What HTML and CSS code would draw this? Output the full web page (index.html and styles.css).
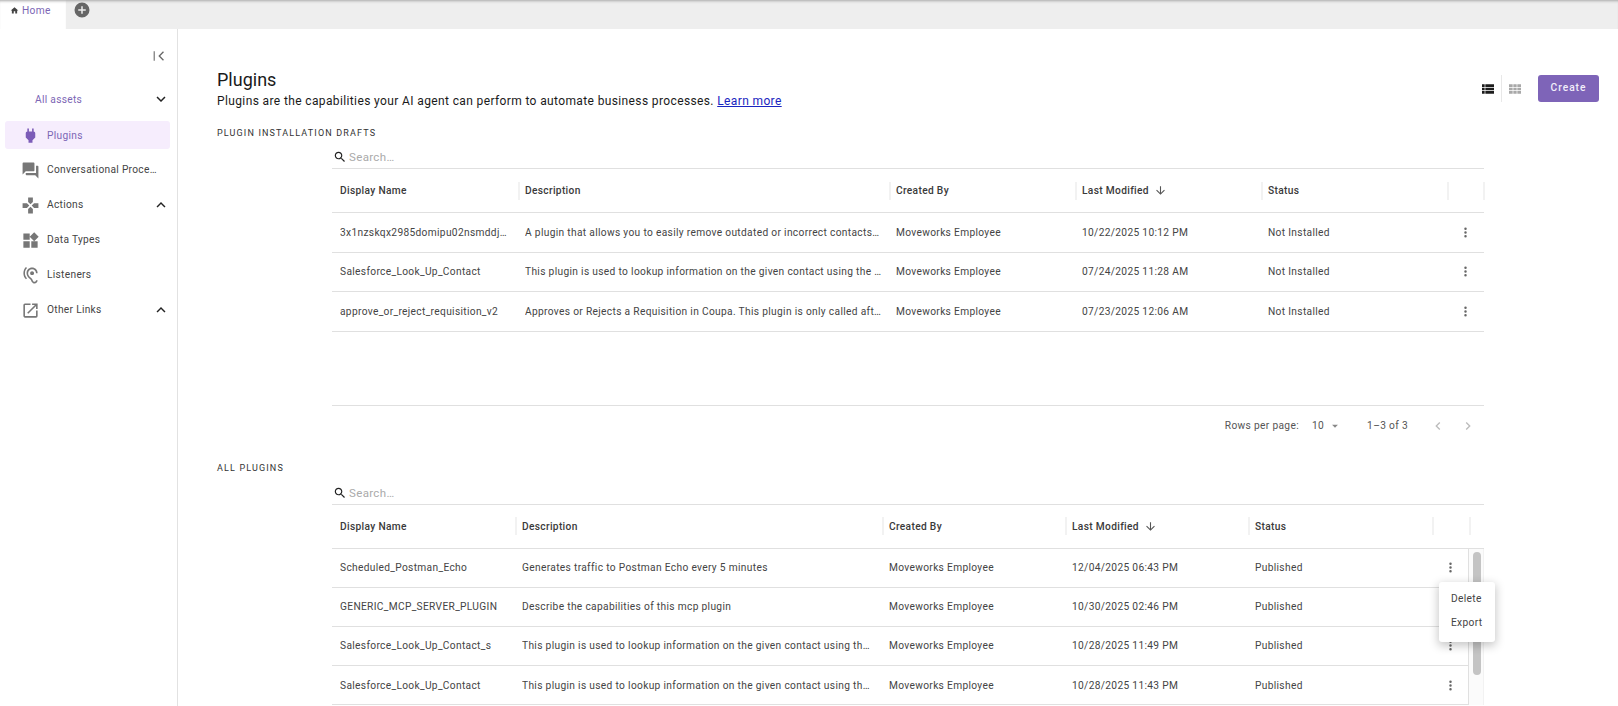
FILE: index.html
```html
<!DOCTYPE html>
<html lang="en">
<head>
<meta charset="utf-8">
<title>Plugins</title>
<link rel="stylesheet" href="styles.css">
</head>
<body>
<div class="app">
  <header class="tabbar">
    <div class="tab">
      <svg class="tab-icon" viewBox="0 0 24 24"><path d="M10 20v-6h4v6h5v-8h3L12 3 2 12h3v8z"/></svg>
      <span>Home</span>
    </div>
    <span class="add-tab">
      <svg viewBox="0 0 24 24"><path d="M12 2a10 10 0 1 0 0 20 10 10 0 0 0 0-20zm5 11h-4v4h-2v-4H7v-2h4V7h2v4h4z"/></svg>
    </span>
  </header>
  <div class="body">
    <aside class="sidebar">
      <div class="collapse">
        <svg viewBox="0 0 24 24"><path d="M4 5h1.600v14H4zM19.400 6.400 18 5l-7 7 7 7 1.400-1.400L13.800 12z"/></svg>
      </div>
      <div class="assets">
        <span>All assets</span>
        <svg class="chev" viewBox="0 0 24 24"><path d="M7.400 8.600 12 13.200l4.600-4.600L18 10l-6 6-6-6z"/></svg>
      </div>
      <nav class="nav">
        <a class="nav-item active">
          <svg viewBox="0 0 24 24"><path d="M16 7V3h-2v4h-4V3H8v4c-1 0-2 1-2 2v5.500L9.500 18v3h5v-3l3.500-3.500V9c0-1-1-2-2-2z"/></svg>
          <span>Plugins</span>
        </a>
        <a class="nav-item">
          <svg viewBox="0 0 24 24"><path d="M21 6h-2v9H6v2c0 .55.45 1 1 1h11l4 4V7c0-.55-.45-1-1-1zm-4 6V3c0-.55-.45-1-1-1H3c-.55 0-1 .45-1 1v14l4-4h10c.55 0 1-.45 1-1z"/></svg>
          <span>Conversational Proce…</span>
        </a>
        <a class="nav-item">
          <svg viewBox="0 0 24 24"><path d="M15 7.500V2H9v5.500l3 3 3-3zM7.500 9H2v6h5.500l3-3-3-3zM9 16.500V22h6v-5.500l-3-3-3 3zM16.500 9l-3 3 3 3H22V9h-5.500z"/></svg>
          <span>Actions</span>
          <svg class="chev" viewBox="0 0 24 24"><path d="M7.400 15.400 12 10.800l4.600 4.600L18 14l-6-6-6 6z"/></svg>
        </a>
        <a class="nav-item">
          <svg viewBox="0 0 24 24"><path d="M13 13v8h8v-8h-8zM3 21h8v-8H3v8zM3 3v8h8V3H3zm13.660-1.310L11 7.340 16.660 13l5.660-5.660-5.660-5.650z"/></svg>
          <span>Data Types</span>
        </a>
        <a class="nav-item">
          <svg viewBox="0 0 24 24"><path d="M17 20c-.29 0-.56-.06-.76-.15-.71-.37-1.210-.88-1.710-2.380-.51-1.560-1.470-2.290-2.390-3-.79-.61-1.610-1.240-2.320-2.530C9.290 10.980 9 9.930 9 9c0-2.800 2.200-5 5-5s5 2.200 5 5h2c0-3.930-3.070-7-7-7S7 5.070 7 9c0 1.260.38 2.650 1.070 3.900.91 1.650 1.980 2.480 2.850 3.150.81.62 1.390 1.070 1.710 2.050.6 1.820 1.370 2.840 2.730 3.550.51.23 1.070.35 1.640.35 2.210 0 4-1.790 4-4h-2c0 1.100-.9 2-2 2zM7.640 2.640 6.220 1.220C4.230 3.210 3 5.960 3 9s1.230 5.790 3.220 7.780l1.410-1.410C6.010 13.740 5 11.490 5 9s1.010-4.740 2.640-6.360zM11.500 9c0 1.380 1.120 2.500 2.500 2.500s2.500-1.120 2.500-2.500-1.120-2.500-2.500-2.500-2.500 1.120-2.500 2.500z"/></svg>
          <span>Listeners</span>
        </a>
        <a class="nav-item">
          <svg viewBox="0 0 24 24"><path d="M19 19H5V5h7V3H5a2 2 0 0 0-2 2v14c0 1.100.9 2 2 2h14a2 2 0 0 0 2-2v-7h-2zM14 3v2h3.600l-9.800 9.800 1.400 1.400L19 6.400V10h2V3z"/></svg>
          <span>Other Links</span>
          <svg class="chev" viewBox="0 0 24 24"><path d="M7.400 15.400 12 10.800l4.600 4.600L18 14l-6-6-6 6z"/></svg>
        </a>
      </nav>
    </aside>
    <main class="content">
      <div class="page-head">
        <div class="titles">
          <h1>Plugins</h1>
          <p>Plugins are the capabilities your AI agent can perform to automate business processes. <a href="#">Learn more</a></p>
        </div>
        <div class="actions">
          <span class="view-btn on"><svg viewBox="0 0 24 24"><path d="M3 5h4v4H3zM3 10h4v4H3zM3 15h4v4H3zM8 5h13v4H8zM8 10h13v4H8zM8 15h13v4H8z"/></svg></span>
          <span class="view-sep"></span>
          <span class="view-btn"><svg viewBox="0 0 24 24"><path d="M3 5h5.500v4H3zM9.500 5h5v4h-5zM15.500 5H21v4h-5.500zM3 10h5.500v4H3zM9.500 10h5v4h-5zM15.500 10H21v4h-5.500zM3 15h5.500v4H3zM9.500 15h5v4h-5zM15.500 15H21v4h-5.500z"/></svg></span>
          <button class="create">Create</button>
        </div>
      </div>

      <h2 class="section">PLUGIN INSTALLATION DRAFTS</h2>
      <section class="panel">
        <div class="search">
          <svg viewBox="0 0 24 24"><path d="M15.500 14h-.79l-.28-.27C15.410 12.590 16 11.110 16 9.500 16 5.910 13.090 3 9.500 3S3 5.910 3 9.500 5.910 16 9.500 16c1.610 0 3.090-.59 4.230-1.570l.27.28v.79l5 4.990L20.490 19l-4.990-5zm-6 0C7.010 14 5 11.990 5 9.500S7.010 5 9.500 5 14 7.010 14 9.500 11.990 14 9.500 14z"/></svg>
          <span>Search…</span>
        </div>
        <div class="grid drafts">
          <div class="row head">
            <div class="cell">Display Name</div>
            <div class="cell">Description</div>
            <div class="cell">Created By</div>
            <div class="cell">Last Modified <svg class="sort" viewBox="0 0 24 24"><path d="m20 12-1.400-1.400-5.600 5.600V4h-2v12.200l-5.600-5.600L4 12l8 8z"/></svg></div>
            <div class="cell">Status</div>
            <div class="cell"></div>
            <div class="cell end"></div>
          </div>
          <div class="row">
            <div class="cell"><span class="clip">3x1nzskqx2985domipu02nsmddj…</span></div>
            <div class="cell"><span class="clip">A plugin that allows you to easily remove outdated or incorrect contacts…</span></div>
            <div class="cell">Moveworks Employee</div>
            <div class="cell">10/22/2025 10:12 PM</div>
            <div class="cell">Not Installed</div>
            <div class="cell more"><svg viewBox="0 0 24 24"><path d="M12 8a2 2 0 1 0 0-4 2 2 0 0 0 0 4zm0 2a2 2 0 1 0 0 4 2 2 0 0 0 0-4zm0 6a2 2 0 1 0 0 4 2 2 0 0 0 0-4z"/></svg></div>
            <div class="cell end"></div>
          </div>
          <div class="row">
            <div class="cell"><span class="clip">Salesforce_Look_Up_Contact</span></div>
            <div class="cell"><span class="clip">This plugin is used to lookup information on the given contact using the …</span></div>
            <div class="cell">Moveworks Employee</div>
            <div class="cell">07/24/2025 11:28 AM</div>
            <div class="cell">Not Installed</div>
            <div class="cell more"><svg viewBox="0 0 24 24"><path d="M12 8a2 2 0 1 0 0-4 2 2 0 0 0 0 4zm0 2a2 2 0 1 0 0 4 2 2 0 0 0 0-4zm0 6a2 2 0 1 0 0 4 2 2 0 0 0 0-4z"/></svg></div>
            <div class="cell end"></div>
          </div>
          <div class="row">
            <div class="cell"><span class="clip">approve_or_reject_requisition_v2</span></div>
            <div class="cell"><span class="clip">Approves or Rejects a Requisition in Coupa. This plugin is only called aft…</span></div>
            <div class="cell">Moveworks Employee</div>
            <div class="cell">07/23/2025 12:06 AM</div>
            <div class="cell">Not Installed</div>
            <div class="cell more"><svg viewBox="0 0 24 24"><path d="M12 8a2 2 0 1 0 0-4 2 2 0 0 0 0 4zm0 2a2 2 0 1 0 0 4 2 2 0 0 0 0-4zm0 6a2 2 0 1 0 0 4 2 2 0 0 0 0-4z"/></svg></div>
            <div class="cell end"></div>
          </div>
        </div>
        <div class="filler"></div>
        <div class="pager">
          <span class="rpp">Rows per page:</span>
          <span class="rpp-val">10</span>
          <svg class="caret" viewBox="0 0 24 24"><path d="m7 10 5 5 5-5z"/></svg>
          <span class="count">1–3 of 3</span>
          <svg class="pg" viewBox="0 0 24 24"><path d="M15.400 7.400 14 6l-6 6 6 6 1.400-1.400-4.600-4.600z"/></svg>
          <svg class="pg" viewBox="0 0 24 24"><path d="M10 6 8.600 7.400l4.600 4.600-4.600 4.600L10 18l6-6z"/></svg>
        </div>
      </section>

      <h2 class="section second">ALL PLUGINS</h2>
      <section class="panel">
        <div class="search search-second">
          <svg viewBox="0 0 24 24"><path d="M15.500 14h-.79l-.28-.27C15.410 12.590 16 11.110 16 9.500 16 5.910 13.090 3 9.500 3S3 5.910 3 9.500 5.910 16 9.500 16c1.610 0 3.090-.59 4.230-1.570l.27.28v.79l5 4.990L20.490 19l-4.990-5zm-6 0C7.010 14 5 11.990 5 9.500S7.010 5 9.500 5 14 7.010 14 9.500 11.990 14 9.500 14z"/></svg>
          <span>Search…</span>
        </div>
        <div class="grid all">
          <div class="row head">
            <div class="cell">Display Name</div>
            <div class="cell">Description</div>
            <div class="cell">Created By</div>
            <div class="cell">Last Modified <svg class="sort" viewBox="0 0 24 24"><path d="m20 12-1.400-1.400-5.600 5.600V4h-2v12.200l-5.600-5.600L4 12l8 8z"/></svg></div>
            <div class="cell">Status</div>
            <div class="cell"></div>
            <div class="cell end"></div>
          </div>
          <div class="all-body">
            <div class="rows">
              <div class="row">
                <div class="cell"><span class="clip">Scheduled_Postman_Echo</span></div>
                <div class="cell"><span class="clip">Generates traffic to Postman Echo every 5 minutes</span></div>
                <div class="cell">Moveworks Employee</div>
                <div class="cell">12/04/2025 06:43 PM</div>
                <div class="cell">Published</div>
                <div class="cell more"><svg viewBox="0 0 24 24"><path d="M12 8a2 2 0 1 0 0-4 2 2 0 0 0 0 4zm0 2a2 2 0 1 0 0 4 2 2 0 0 0 0-4zm0 6a2 2 0 1 0 0 4 2 2 0 0 0 0-4z"/></svg></div>
              </div>
              <div class="row">
                <div class="cell"><span class="clip">GENERIC_MCP_SERVER_PLUGIN</span></div>
                <div class="cell"><span class="clip">Describe the capabilities of this mcp plugin</span></div>
                <div class="cell">Moveworks Employee</div>
                <div class="cell">10/30/2025 02:46 PM</div>
                <div class="cell">Published</div>
                <div class="cell more"><svg viewBox="0 0 24 24"><path d="M12 8a2 2 0 1 0 0-4 2 2 0 0 0 0 4zm0 2a2 2 0 1 0 0 4 2 2 0 0 0 0-4zm0 6a2 2 0 1 0 0 4 2 2 0 0 0 0-4z"/></svg></div>
              </div>
              <div class="row">
                <div class="cell"><span class="clip">Salesforce_Look_Up_Contact_s</span></div>
                <div class="cell"><span class="clip">This plugin is used to lookup information on the given contact using th…</span></div>
                <div class="cell">Moveworks Employee</div>
                <div class="cell">10/28/2025 11:49 PM</div>
                <div class="cell">Published</div>
                <div class="cell more"><svg viewBox="0 0 24 24"><path d="M12 8a2 2 0 1 0 0-4 2 2 0 0 0 0 4zm0 2a2 2 0 1 0 0 4 2 2 0 0 0 0-4zm0 6a2 2 0 1 0 0 4 2 2 0 0 0 0-4z"/></svg></div>
              </div>
              <div class="row">
                <div class="cell"><span class="clip">Salesforce_Look_Up_Contact</span></div>
                <div class="cell"><span class="clip">This plugin is used to lookup information on the given contact using th…</span></div>
                <div class="cell">Moveworks Employee</div>
                <div class="cell">10/28/2025 11:43 PM</div>
                <div class="cell">Published</div>
                <div class="cell more"><svg viewBox="0 0 24 24"><path d="M12 8a2 2 0 1 0 0-4 2 2 0 0 0 0 4zm0 2a2 2 0 1 0 0 4 2 2 0 0 0 0-4zm0 6a2 2 0 1 0 0 4 2 2 0 0 0 0-4z"/></svg></div>
              </div>
            </div>
            <div class="scrolltrack"><div class="scrollthumb"></div></div>
            <div class="menu">
              <div class="menu-item">Delete</div>
              <div class="menu-item">Export</div>
            </div>
          </div>
        </div>
      </section>
    </main>
  </div>
</div>
</body>
</html>
```

FILE: styles.css
```css
* { box-sizing: border-box; }
html, body { margin: 0; height: 100%; overflow: hidden; }
body { font-family: Roboto, "Liberation Sans", sans-serif; color: #333; background: #fff; }
svg { display: block; fill: currentColor; }

.app { height: 706px; display: flex; flex-direction: column; overflow: hidden; }

.tabbar { flex: none; height: 29px; background: #eeeeee; display: flex; align-items: flex-start; box-shadow: inset 0 3px 3px -2px #a8a8a8; }
.tab { width: 66px; height: 29px; background: #fff; display: flex; align-items: center; gap: 3px; padding: 0 0 9px 10px; font-size: 10.200px; letter-spacing: .3px; color: #7c66b5; box-shadow: inset 0 3px 3px -2px #a8a8a8; }
.tab-icon { width: 9px; height: 9px; color: #444; }
.add-tab { margin: 1px 0 0 7px; color: #666; }
.add-tab svg { width: 18px; height: 18px; }

.body { flex: 1; display: flex; min-height: 0; }

.sidebar { flex: none; width: 178px; border-right: 1px solid #e2e2e2; padding: 0 7px 0 5px; }
.collapse { display: flex; justify-content: flex-end; padding: 19px 3px 0 0; color: #666; height: 56px; }
.collapse svg { width: 16px; height: 16px; }
.assets { display: flex; align-items: center; justify-content: space-between; height: 30px; padding: 0 0 0 30px; margin-top: -1px; font-size: 10.200px; letter-spacing: .3px; color: #7c66b5; }
.chev { width: 18px; height: 18px; color: #222; flex: none; }
.nav { margin-top: 7px; display: flex; flex-direction: column; }
.nav-item { height: 35px; display: flex; align-items: center; padding: 0 0 0 16px; gap: 7px; font-size: 10.200px; letter-spacing: .3px; color: #444; border-radius: 3px; }
.nav-item > svg:first-child { width: 19px; height: 19px; color: #777; flex: none; margin-top: 1px; }
.nav-item > span { flex: 1; white-space: nowrap; }
.nav-item.active { height: 28px; background: #f6edfd; color: #7c66b5; margin-bottom: 3px; }
.nav-item.active > svg:first-child { color: #7c5cb8; }

.content { flex: 1; min-width: 0; padding: 40px 0 0 39px; }
.page-head { display: flex; justify-content: space-between; height: 58px; padding-right: 19px; }
h1 { margin: 0; font-size: 18px; font-weight: 400; line-height: 22px; color: #1a1a1a; }
.titles p { margin: 2px 0 0; font-size: 12px; line-height: 16px; letter-spacing: .375px; color: #1a1a1a; }
.titles a { color: #1a25c0; }
.actions { display: flex; align-items: center; height: 27px; margin-top: 6px; }
.view-btn { width: 16px; height: 16px; color: #a8a8a8; }
.view-btn.on { color: #1c1c1c; }
.view-btn svg { width: 16px; height: 16px; }
.view-sep { width: 1px; height: 27px; background: #e8e8e8; margin: 0 5px; }
.create { margin-left: 15px; width: 61px; height: 27px; border: 0; border-radius: 3px; background: #7e64b8; color: #f2eefa; font: 500 10.200px Roboto, sans-serif; letter-spacing: 1px; padding: 0 0 2px; }

.section { margin: 0; font-size: 9px; font-weight: 400; letter-spacing: 1.150px; line-height: 12px; color: #333; }
.section.second { margin-top: 16px; }

.panel { margin-left: 115px; width: 1152px; }
.search { height: 30px; display: flex; align-items: center; gap: 2px; border-bottom: 1px solid #e0e0e0; font-size: 11.500px; letter-spacing: .35px; color: #aaa; padding: 6px 0 0 1px; }
.search-second { height: 31px; padding-top: 8px; }
.search svg { width: 14px; height: 14px; color: #222; }

.row { display: grid; height: 39.500px; border-bottom: 1px solid #e0e0e0; align-items: center; font-size: 10.200px; letter-spacing: .33px; color: #444; }
.drafts .row { grid-template-columns: 186px 371px 186px 186px 186px 36px 1px; }
.drafts .row.head { height: 44px; }
.all .row.head { grid-template-columns: 183px 367px 183px 183px 184px 37px 15px; height: 44px; }
.all .rows .row { grid-template-columns: 183px 367px 183px 183px 184px 37px; height: 39.200px; }
.cell { padding: 0 7px; min-width: 0; white-space: nowrap; }
.cell:first-child { padding-left: 8px; }
.clip { display: block; overflow: hidden; text-overflow: ellipsis; }
.head .cell { height: 18px; display: flex; align-items: center; font-weight: 500; color: #3a3a3a; border-left: 2px solid #f2f2f2; padding-left: 5px; }
.head .cell:first-child { border-left: 0; padding-left: 8px; }
.sort { width: 13px; height: 13px; margin-left: 5px; color: #555; }
.more { display: flex; justify-content: center; padding: 0; color: #666; }
.more svg { width: 15px; height: 15px; }

.filler { height: 74px; border-bottom: 1px solid #e0e0e0; }
.pager { height: 40px; display: flex; align-items: center; justify-content: flex-end; font-size: 10.200px; letter-spacing: .33px; color: #555; padding-right: 8px; }
.rpp-val { margin-left: 13px; }
.caret { width: 14px; height: 14px; color: #888; margin-left: 4px; }
.count { margin: 0 8px 0 25px; }
.pg { width: 16px; height: 16px; color: #bbb; margin-left: 14px; }

.all-body { position: relative; display: flex; }
.rows { width: 1137px; border-right: 1px solid #e0e0e0; }
.scrolltrack { width: 15px; padding: 3px 3px 3px 4px; border-right: 1px solid #f2f2f2; background: #fbfbfb; }
.scrollthumb { width: 8px; height: 123px; border-radius: 4px; background: #c4c4c4; }

.menu { position: absolute; left: 1107px; top: 33px; width: 56px; height: 60px; background: #fff; border-radius: 3px; box-shadow: 0 3px 10px 1px rgba(0,0,0,.22); padding-top: 5px; font-size: 10.200px; letter-spacing: .33px; color: #444; }
.menu-item { height: 24px; line-height: 24px; padding-left: 12px; }
```
